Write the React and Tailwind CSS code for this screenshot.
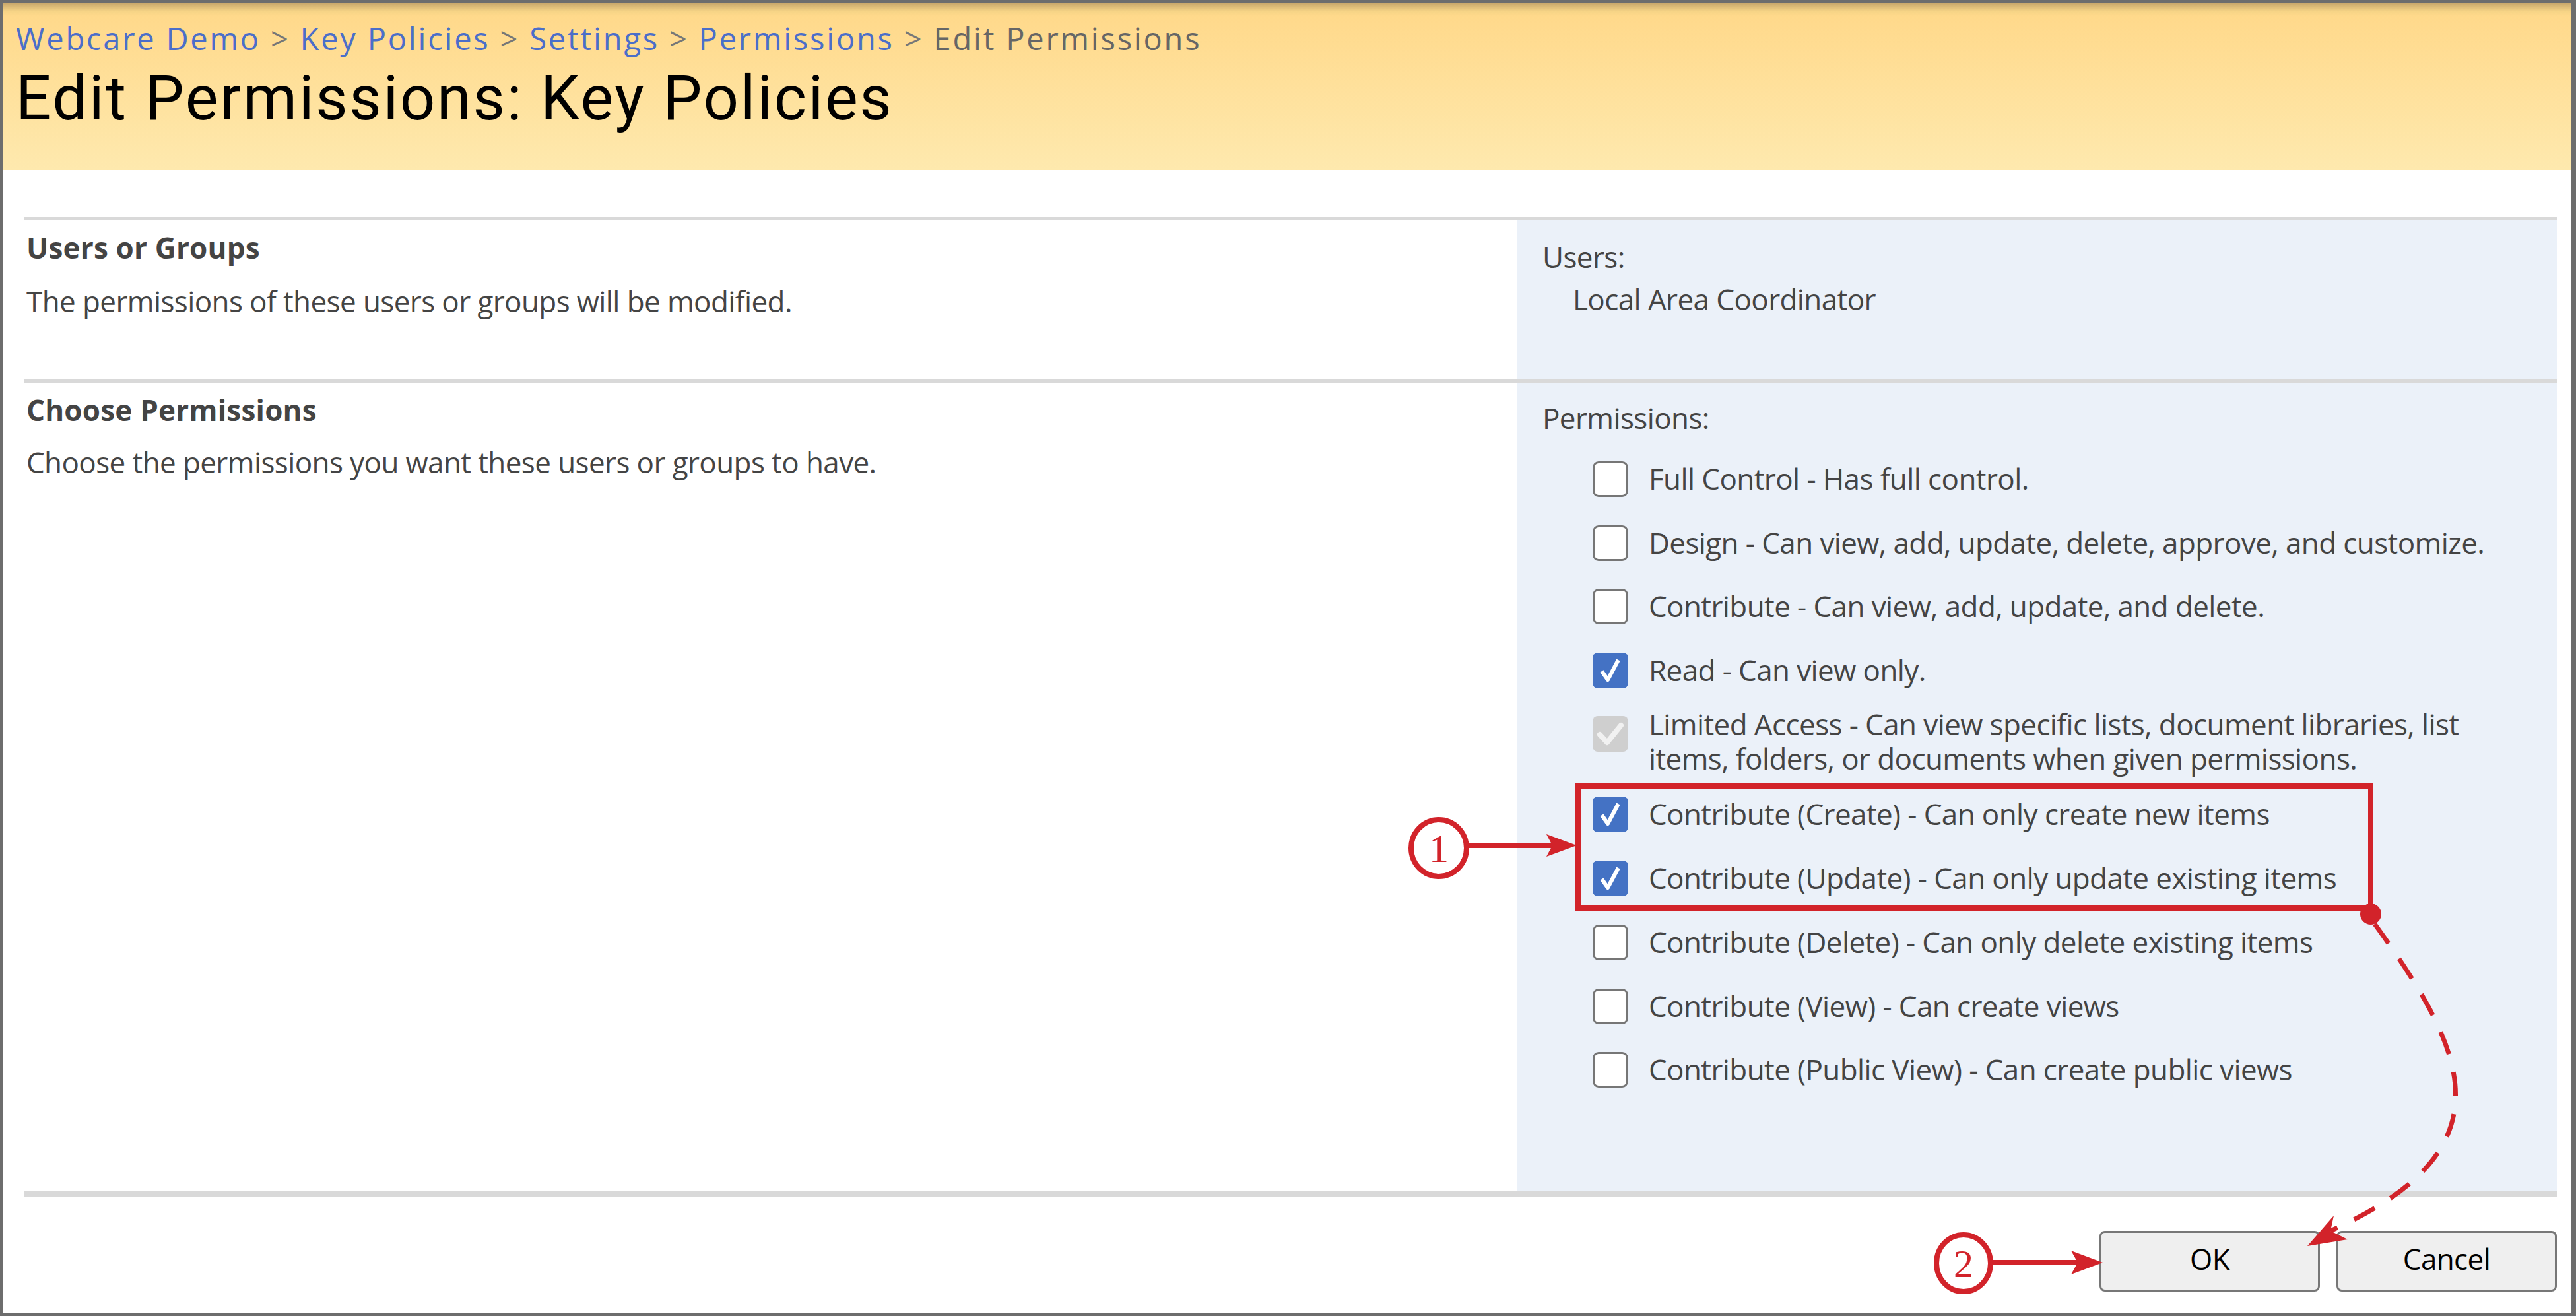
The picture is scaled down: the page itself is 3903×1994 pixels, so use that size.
import React from 'react'

const crumbs = ['Webcare Demo', 'Key Policies', 'Settings', 'Permissions']

const permissions = [
  { label: 'Full Control - Has full control.', state: 'off' },
  { label: 'Design - Can view, add, update, delete, approve, and customize.', state: 'off' },
  { label: 'Contribute - Can view, add, update, and delete.', state: 'off' },
  { label: 'Read - Can view only.', state: 'on' },
  {
    label:
      'Limited Access - Can view specific lists, document libraries, list items, folders, or documents when given permissions.',
    state: 'locked',
  },
  { label: 'Contribute (Create) - Can only create new items', state: 'on' },
  { label: 'Contribute (Update) - Can only update existing items', state: 'on' },
  { label: 'Contribute (Delete) - Can only delete existing items', state: 'off' },
  { label: 'Contribute (View) - Can create views', state: 'off' },
  { label: 'Contribute (Public View) - Can create public views', state: 'off' },
]

function CheckBox({ state }) {
  if (state === 'on') {
    return (
      <span className="flex h-[54px] w-[54px] shrink-0 items-center justify-center rounded-[8px] bg-[#4472c4]">
        <svg width="54" height="54" viewBox="0 0 54 54">
          <path d="M14 28 L23 41 L39 11" fill="none" stroke="#fff" strokeWidth="6" strokeLinejoin="round" />
        </svg>
      </span>
    )
  }
  if (state === 'locked') {
    return (
      <span className="mt-[14px] flex h-[54px] w-[54px] shrink-0 items-center justify-center rounded-[8px] bg-[#cfcfcf]">
        <svg width="54" height="54" viewBox="0 0 54 54">
          <path d="M11 28 L22 40 L43 14" fill="none" stroke="#f1f1f1" strokeWidth="8" strokeLinecap="round" strokeLinejoin="round" />
        </svg>
      </span>
    )
  }
  return <span className="block h-[54px] w-[54px] shrink-0 rounded-[9px] border-[3px] border-[#767676] bg-white" />
}

function PermissionRow({ item }) {
  const tall = item.state === 'locked'
  return (
    <div className={tall ? 'flex items-start pt-[6.75px] pb-[10.5px]' : 'flex items-start py-[21.4px]'}>
      <CheckBox state={item.state} />
      <span className="ml-[31px] max-w-[1312px] text-[44px] leading-[52px] tracking-[-0.6px] text-[#444]">
        {item.label}
      </span>
    </div>
  )
}

function Button({ children }) {
  return (
    <button className="h-[92px] w-[334px] rounded-[8px] border-[3px] border-[#777] bg-[#efefef] pb-[8px] text-[44px] leading-[52px] tracking-[-0.6px] text-black">
      {children}
    </button>
  )
}

// callouts drawn on top of the form
function Callouts() {
  const red = '#d2232a'
  return (
    <svg className="pointer-events-none absolute left-[-4px] top-[-4px]" width="3903" height="1994" viewBox="0 0 3903 1994">
      <rect x="2391" y="1191" width="1201" height="185" fill="none" stroke={red} strokeWidth="8" />
      <circle cx="3592" cy="1385" r="16" fill={red} />
      <path
        d="M3598 1400 C3735 1590, 3810 1740, 3531 1865"
        fill="none"
        stroke={red}
        strokeWidth="7"
        strokeDasharray="36 28"
      />
      <polygon points="3496,1888 3536,1842 3531,1865 3557,1878" fill={red} />

      <line x1="2222" y1="1281" x2="2352" y2="1281" stroke={red} strokeWidth="8" />
      <polygon points="2389,1281 2343,1264 2352,1281 2343,1298" fill={red} />
      <ellipse cx="2180" cy="1285" rx="42" ry="43" fill="#fff" stroke={red} strokeWidth="8" />
      <text x="2180" y="1306" textAnchor="middle" fill={red} fontSize="60" fontFamily="'Liberation Serif', serif">
        1
      </text>

      <line x1="3016" y1="1913" x2="3148" y2="1913" stroke={red} strokeWidth="8" />
      <polygon points="3186,1913 3138,1895 3148,1913 3138,1931" fill={red} />
      <ellipse cx="2975" cy="1914" rx="41" ry="43" fill="#fff" stroke={red} strokeWidth="8" />
      <text x="2975" y="1935" textAnchor="middle" fill={red} fontSize="60" fontFamily="'Liberation Serif', serif">
        2
      </text>
    </svg>
  )
}

export default function App() {
  return (
    <div className="relative h-[1994px] w-[3903px] overflow-hidden border-t-4 border-l-4 border-b-4 border-r-[7px] border-[#6d6d6d] bg-white font-['Open_Sans',sans-serif]">
      {/* Title bar */}
      <div className="h-[254px] bg-[linear-gradient(180deg,#c6a56a_0px,#f6d486_13px,#ffd98b_20px,#fee9ae_100%)] px-[20px] pt-[26px]">
        <nav className="flex items-baseline text-[47px] leading-[56px] tracking-[2.8px]">
          {crumbs.map((c) => (
            <React.Fragment key={c}>
              <a className="text-[#4b6ec9]">{c}</a>
              <span className="mx-[15px] text-[#777]">&gt;</span>
            </React.Fragment>
          ))}
          <span className="text-[#666]">Edit Permissions</span>
        </nav>
        <h1 className="mt-[7.5px] font-['Roboto',sans-serif] text-[94px] font-normal leading-[110px] tracking-[2.6px] text-black">
          Edit Permissions: Key Policies
        </h1>
      </div>

      <div className="pl-[32px] pr-[22px] pt-[71px]">
        <div className="h-[5px] bg-[#d9d9d9]" />

        {/* Users or Groups */}
        <div className="grid h-[241px] grid-cols-[2263px_1fr]">
          <div className="pl-[4px] pt-[15px] text-[44px] leading-[52px] tracking-[-0.6px] text-[#444]">
            <div className="font-bold tracking-[0.2px]">Users or Groups</div>
            <div className="mt-[29px]">The permissions of these users or groups will be modified.</div>
          </div>
          <div className="bg-[#ebf1f9] pl-[38px] pt-[29px] text-[44px] leading-[52px] tracking-[-0.6px] text-[#444]">
            <div>Users:</div>
            <div className="mt-[12px] pl-[46px]">Local Area Coordinator</div>
          </div>
        </div>

        <div className="h-[5px] bg-[#d9d9d9]" />

        {/* Choose Permissions */}
        <div className="grid h-[1225px] grid-cols-[2263px_1fr]">
          <div className="pl-[4px] pt-[15px] text-[44px] leading-[52px] tracking-[-0.6px] text-[#444]">
            <div className="font-bold tracking-[0.2px]">Choose Permissions</div>
            <div className="mt-[27px]">Choose the permissions you want these users or groups to have.</div>
          </div>
          <div className="bg-[#ebf1f9] pl-[38px] pt-[27px]">
            <div className="text-[44px] leading-[52px] tracking-[-0.6px] text-[#444]">Permissions:</div>
            <div className="mt-[18.5px] pl-[76px]">
              {permissions.map((p) => (
                <PermissionRow key={p.label} item={p} />
              ))}
            </div>
          </div>
        </div>

        <div className="h-[8px] bg-[#d9d9d9]" />

        <div className="flex justify-end gap-[25px] pt-[52px]">
          <Button>OK</Button>
          <Button>Cancel</Button>
        </div>
      </div>

      <Callouts />
    </div>
  )
}
